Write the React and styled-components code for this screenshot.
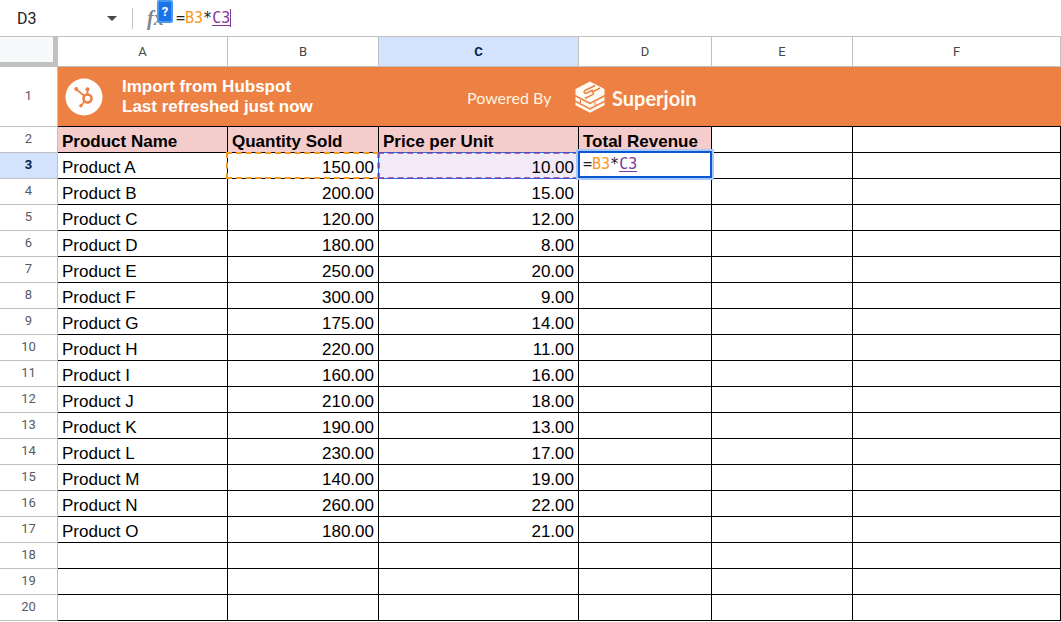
import React from "react";
import styled, { createGlobalStyle } from "styled-components";

const columns = ["A", "B", "C", "D", "E", "F"];

const products = [
    ["Product A", "150.00", "10.00"],
    ["Product B", "200.00", "15.00"],
    ["Product C", "120.00", "12.00"],
    ["Product D", "180.00", "8.00"],
    ["Product E", "250.00", "20.00"],
    ["Product F", "300.00", "9.00"],
    ["Product G", "175.00", "14.00"],
    ["Product H", "220.00", "11.00"],
    ["Product I", "160.00", "16.00"],
    ["Product J", "210.00", "18.00"],
    ["Product K", "190.00", "13.00"],
    ["Product L", "230.00", "17.00"],
    ["Product M", "140.00", "19.00"],
    ["Product N", "260.00", "22.00"],
    ["Product O", "180.00", "21.00"],
    ["", "", ""],
    ["", "", ""],
    ["", "", ""],
];

const Formula = () => (
    <>
        =<RefB>B3</RefB>*<RefC>C3</RefC>
    </>
);

const HubspotLogo = () => (
    <svg width="38" height="38" viewBox="0 0 38 38" aria-label="HubSpot">
        <circle cx="19" cy="19" r="18.5" fill="#fff" />
        <g fill="none" stroke="#ed8143">
            <circle cx="22.5" cy="20.5" r="4" strokeWidth="2.6" />
            <path d="M22.5 17V12M19.5 18L11.5 11.5M19.5 23.5L16 27.5" strokeWidth="1.8" />
        </g>
        <g fill="#ed8143">
            <circle cx="22.5" cy="11.3" r="2" />
            <circle cx="11.2" cy="11" r="2" />
            <circle cx="16" cy="27.7" r="1.8" />
        </g>
    </svg>
);

const SuperjoinLogo = () => (
    <svg width="30" height="32" viewBox="0 0 30 32" aria-hidden="true">
        <g fill="#fffaf0">
            <path d="M15 0.5L29.5 8V14L15 21.5L0.5 14V8Z" />
            <path d="M0.5 15.8L15 23.3L29.5 15.8V19.5L15 27L0.5 19.5Z" />
            <path d="M0.5 21.3L15 28.8L29.5 21.3V24.3L15 31.8L0.5 24.3Z" />
        </g>
        <g fill="none" stroke="#ed8143" strokeWidth="1.5">
            <path d="M20 4.5L10 9.5Q8 11 10 12L11 12.5L18 9" />
            <path d="M25 7L17.5 11Q19.5 12.5 17.5 13.7L10 17.5" />
            <path d="M20 21V24.5M5.5 18.5V22" strokeWidth="1" />
        </g>
    </svg>
);

const App = () => {
    return (
        <Page>
            <GlobalStyle />
            <FormulaBar>
                <NameBox aria-label="Name box" defaultValue="D3" />
                <MenuButton type="button" aria-label="Named ranges">
                    <svg width="10" height="5" viewBox="0 0 10 5">
                        <path d="M0 0H10L5 5Z" fill="#444746" />
                    </svg>
                </MenuButton>
                <Divider />
                <FxLabel>
                    fx
                    <HelpButton type="button" aria-label="Formula help">?</HelpButton>
                </FxLabel>
                <FormulaInput role="textbox" aria-label="Formula" contentEditable suppressContentEditableWarning>
                    <Formula />
                    <Caret />
                </FormulaInput>
            </FormulaBar>
            <Sheet>
                <colgroup>
                    <Col $w={58} />
                    <Col $w={170} />
                    <Col $w={151} />
                    <Col $w={200} />
                    <Col $w={133} />
                    <Col $w={141} />
                    <Col />
                </colgroup>
                <thead>
                    <tr>
                        <Corner />
                        {columns.map((name) => (
                            <ColumnHead key={name} scope="col" $active={name === "C"}>
                                {name}
                            </ColumnHead>
                        ))}
                    </tr>
                </thead>
                <tbody>
                    <tr>
                        <RowHead scope="row" $tall>1</RowHead>
                        <BannerCell colSpan={6}>
                            <Banner>
                                <HubspotLogo />
                                <BannerTitle>
                                    Import from Hubspot
                                    <br />
                                    Last refreshed just now
                                </BannerTitle>
                                <PoweredBy>Powered By</PoweredBy>
                                <SuperjoinLogo />
                                <BrandName>Superjoin</BrandName>
                            </Banner>
                        </BannerCell>
                    </tr>
                    <tr>
                        <RowHead scope="row">2</RowHead>
                        <TitleCell>Product Name</TitleCell>
                        <TitleCell>Quantity Sold</TitleCell>
                        <TitleCell>Price per Unit</TitleCell>
                        <TitleCell>Total Revenue</TitleCell>
                        <Cell />
                        <Cell />
                    </tr>
                    {products.map(([name, quantity, price], i) => (
                        <tr key={i}>
                            <RowHead scope="row" $active={i === 0}>{i + 3}</RowHead>
                            <Cell>{name}</Cell>
                            <Cell $number>
                                {quantity}
                                {i === 0 && <QuantityRange />}
                            </Cell>
                            <Cell $number $picked={i === 0}>
                                {price}
                                {i === 0 && <PriceRange />}
                            </Cell>
                            <Cell>
                                {i === 0 && (
                                    <CellEditor role="textbox" aria-label="D3" contentEditable suppressContentEditableWarning>
                                        <Formula />
                                    </CellEditor>
                                )}
                            </Cell>
                            <Cell />
                            <Cell />
                        </tr>
                    ))}
                </tbody>
            </Sheet>
        </Page>
    );
};

const GlobalStyle = createGlobalStyle`
    * {
        box-sizing: border-box;
    }

    body {
        margin: 0;
        background: #fff;
        font-family: "Liberation Sans", Arial, sans-serif;
    }
`;

const Page = styled.div`
    width: 100%;
    height: 100vh;
    overflow: hidden;
`;

const FormulaBar = styled.div`
    display: flex;
    align-items: center;
    height: 37px;
    border-bottom: 1px solid #c0c0c0;
`;

const NameBox = styled.input`
    width: 102px;
    padding: 0 0 0 17px;
    border: none;
    outline: none;
    background: none;
    color: #202124;
    font: 16px Roboto, sans-serif;
`;

const MenuButton = styled.button`
    display: flex;
    align-items: center;
    justify-content: center;
    width: 20px;
    height: 20px;
    padding: 0;
    border: none;
    background: none;
`;

const Divider = styled.div`
    width: 1px;
    height: 21px;
    margin: 0 14px 0 10px;
    background: #c7c7c7;
`;

const FxLabel = styled.div`
    position: relative;
    width: 29px;
    color: #80868b;
    font: italic bold 20px "Liberation Serif", serif;
`;

const HelpButton = styled.button`
    position: absolute;
    top: -7px;
    left: 10px;
    width: 16px;
    height: 23px;
    padding: 0;
    border: 2px solid #4a9af0;
    border-radius: 2px;
    background: #1a73e8;
    color: #fff;
    font: bold 13px Roboto, sans-serif;
`;

const RefB = styled.span`
    color: #f7981d;
`;

const RefC = styled.span`
    color: #7e3794;
    text-decoration: underline;
    text-underline-offset: 2px;
`;

const FormulaInput = styled.div`
    display: flex;
    align-items: center;
    flex: 1;
    outline: none;
    color: #202124;
    font: 15px "DejaVu Sans Mono", monospace;
`;

const Caret = styled.span`
    width: 1px;
    height: 18px;
    background: #7e3794;
`;

const Sheet = styled.table`
    width: 100%;
    table-layout: fixed;
    border-collapse: separate;
    border-spacing: 0;
`;

const Col = styled.col`
    width: ${({ $w }) => ($w ? `${$w}px` : "auto")};
`;

const Corner = styled.td`
    height: 30px;
    padding: 0;
    border-right: 5px solid #c0c2c1;
    border-bottom: 5px solid #c0c2c1;
    background: #f8f9fa;
`;

const ColumnHead = styled.th`
    height: 30px;
    padding: 0;
    border-right: 1px solid #c0c0c0;
    border-bottom: 1px solid #c0c0c0;
    background: ${({ $active }) => ($active ? "#d3e3fd" : "#fff")};
    color: ${({ $active }) => ($active ? "#041e49" : "#444746")};
    font: ${({ $active }) => ($active ? "bold" : "normal")} 13px Roboto, sans-serif;
`;

const RowHead = styled.th`
    height: ${({ $tall }) => ($tall ? "60px" : "26px")};
    padding: 0 0 2px;
    border-right: 1px solid #c0c0c0;
    border-bottom: 1px solid #c0c0c0;
    background: ${({ $active }) => ($active ? "#d3e3fd" : "#fff")};
    color: ${({ $active }) => ($active ? "#041e49" : "#575b5f")};
    font: ${({ $active }) => ($active ? "bold" : "normal")} 13px Roboto, sans-serif;
`;

const Cell = styled.td`
    position: relative;
    height: 26px;
    padding: 5px 4px 0;
    border-right: 1px solid #000;
    border-bottom: 1px solid #000;
    background: ${({ $picked }) => ($picked ? "#f2eaf7" : "#fff")};
    color: #000;
    font-size: 17px;
    line-height: 20px;
    text-align: ${({ $number }) => ($number ? "right" : "left")};
    vertical-align: bottom;
    white-space: nowrap;
`;

const TitleCell = styled(Cell)`
    background: #f4cccc;
    font-weight: bold;
`;

const BannerCell = styled.td`
    padding: 0;
    border-bottom: 1px solid #000;
    background: #ed8143;
`;

const Banner = styled.div`
    display: flex;
    align-items: center;
    padding-left: 7px;
    color: #fff;

    svg {
        flex-shrink: 0;
    }
`;

const BannerTitle = styled.div`
    width: 364px;
    padding-left: 19px;
    font-size: 17px;
    font-weight: bold;
    line-height: 20px;
`;

const PoweredBy = styled.span`
    width: 108px;
    padding-top: 2px;
    color: #fff3e0;
    font: 16px Lato, sans-serif;
`;

const BrandName = styled.span`
    padding: 2px 0 0 7px;
    color: #fffaf0;
    font: bold 20px Lato, sans-serif;
`;

const QuantityRange = styled.div`
    position: absolute;
    inset: -1px -1px -1px -2px;
    border: 2px dashed #f7981d;
`;

const PriceRange = styled.div`
    position: absolute;
    inset: -1px;
    border: 1px solid #1a73e8;

    &::after {
        content: "";
        position: absolute;
        inset: -1px;
        border: 2px dashed #7e3794;
        opacity: 0.7;
    }
`;

const CellEditor = styled.div`
    position: absolute;
    z-index: 1;
    inset: -2px -1px 0;
    padding: 0 3px;
    border: 2px solid #0b57d0;
    outline: 2px solid #a8c7fa;
    background: #fff;
    color: #202124;
    font: 15px/22px "DejaVu Sans Mono", monospace;
`;

export default App;
